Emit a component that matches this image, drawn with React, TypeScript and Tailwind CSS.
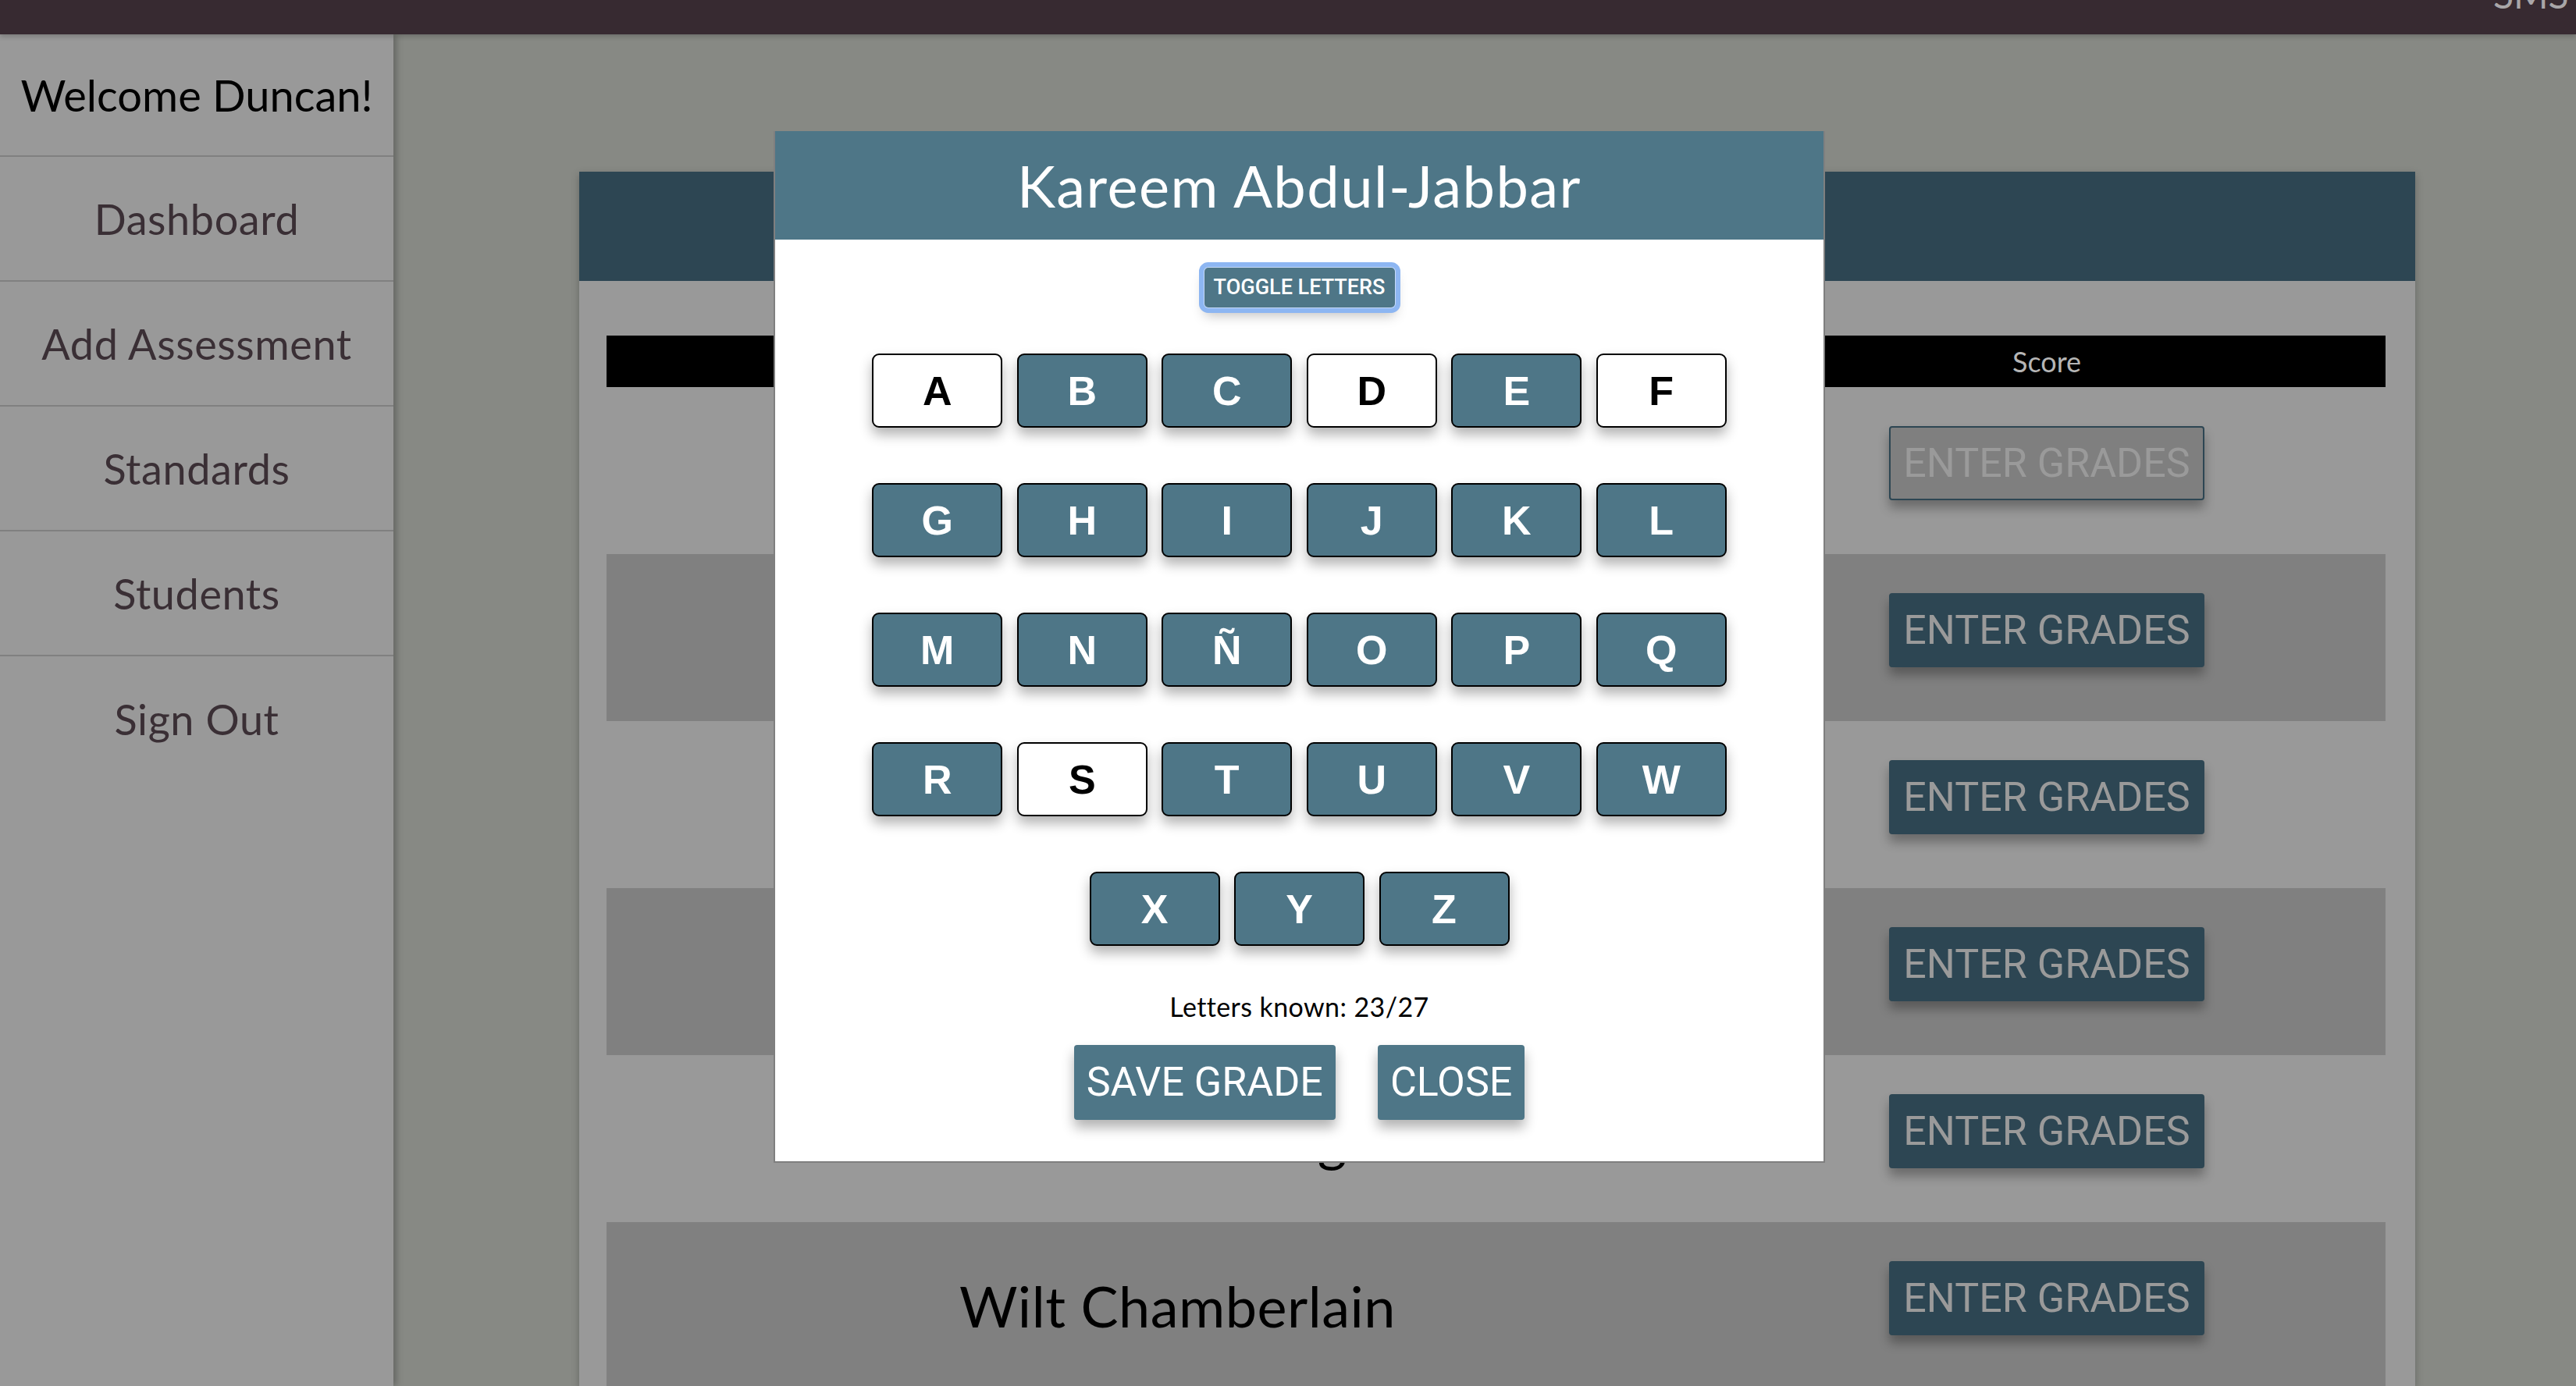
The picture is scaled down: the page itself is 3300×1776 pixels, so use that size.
import React from 'react';

const letterRows = [
  ['A', 'B', 'C', 'D', 'E', 'F'],
  ['G', 'H', 'I', 'J', 'K', 'L'],
  ['M', 'N', 'Ñ', 'O', 'P', 'Q'],
  ['R', 'S', 'T', 'U', 'V', 'W'],
  ['X', 'Y', 'Z'],
];

// letters still to learn show white
const unknown = ['A', 'D', 'F', 'S'];

const navItems = ['Dashboard', 'Add Assessment', 'Standards', 'Students', 'Sign Out'];

const students = [
  'Michael Jordan',
  'Kareem Abdul-Jabbar',
  'LeBron James',
  'Magic Johnson',
  'Patrick Ewing',
  'Wilt Chamberlain',
];

const App: React.FC = () => {
  return (
    <div className="relative w-[3300px] h-[1776px] overflow-hidden bg-[#878984] font-['Lato',sans-serif]">
      {/* Top bar */}
      <div className="relative z-20 h-[44px] bg-[#372a31] overflow-hidden pl-[3194px] shadow-[0_3px_6px_rgba(0,0,0,0.2)]">
        <span className="block whitespace-nowrap text-[48px] leading-none -mt-[31px] text-[#a9a6a8]">SMS</span>
      </div>

      <div className="flex h-[1732px]">
        {/* Sidebar */}
        <aside className="relative z-10 w-[504px] shrink-0 bg-[#999999] shadow-[4px_0_8px_rgba(0,0,0,0.25)]">
          <div className="h-[157px] flex items-center justify-center border-b-2 border-[#808080] text-[56px] text-black">
            Welcome Duncan!
          </div>
          {navItems.map((item, i) => (
            <div
              key={item}
              className={`h-[160px] flex items-center justify-center text-[54px] tracking-[0.6px] text-[#3a2f35] ${i < navItems.length - 1 ? 'border-b-2 border-[#808080]' : ''}`}
            >
              {item}
            </div>
          ))}
        </aside>

        {/* Main */}
        <main className="flex-1 pl-[238px] pr-[206px] pt-[176px]">
          <div className="bg-[#999999] h-full shadow-[0_4px_10px_rgba(0,0,0,0.25)]">
            <div className="h-[140px] bg-[#2d4653]" />
            <div className="pl-[35px] pr-[38px] pt-[70px]">
              <div className="h-[66px] bg-black flex items-center">
                <div className="w-[1411px]" />
                <div className="flex-1 text-center text-[36px] text-[#b5b5b5]">Score</div>
              </div>
              {students.map((name, i) => (
                <div key={name} className={`h-[214px] flex items-center ${i % 2 === 1 ? 'bg-[#808080]' : ''}`}>
                  <div className="w-[1411px] pl-[52px] text-center text-[72px] tracking-[0.5px] text-black whitespace-nowrap">{name}</div>
                  <div className="flex-1 flex justify-center">
                    <button
                      className={`mb-[19px] h-[95px] w-[404px] rounded-[4px] font-['Roboto',sans-serif] text-[52px] text-[#9a9a9a] shadow-[0_10px_14px_rgba(0,0,0,0.3)] ${i === 0 ? 'bg-[#7f7f7f] border-2 border-[#2d4653]' : 'bg-[#2d4653]'}`}
                    >
                      ENTER GRADES
                    </button>
                  </div>
                </div>
              ))}
            </div>
          </div>
        </main>
      </div>

      {/* Grade modal */}
      <div className="absolute left-[991px] top-[168px] w-[1347px] bg-white border-x-2 border-b-2 border-[#7f7f7f]">
        <div className="h-[139px] bg-[#4e7687] flex items-center justify-center text-[74px] tracking-[1.5px] text-white">
          Kareem Abdul-Jabbar
        </div>
        <div className="flex flex-col items-center pt-[36px] pb-[53px]">
          <button className="h-[51px] w-[244px] rounded-[5px] bg-[#4e7687] font-['Roboto',sans-serif] text-[27px] font-medium text-white shadow-[0_0_0_1px_#c6daf8,0_0_0_7px_#8db6f2,0_10px_16px_rgba(0,0,0,0.25)]">
            TOGGLE LETTERS
          </button>

          <div className="mt-[59px] flex flex-col items-center gap-[71px]">
            {letterRows.map((row, r) => (
              <div key={r} className="flex gap-[18.5px]">
                {row.map((l) => {
                  const white = unknown.includes(l);
                  return (
                    <button
                      key={l}
                      className={`w-[167px] h-[95px] rounded-[9px] border-2 border-black font-['Liberation_Sans',Arial,sans-serif] text-[52px] font-bold shadow-[0_9px_16px_rgba(0,0,0,0.3)] ${white ? 'bg-white text-black' : 'bg-[#4e7687] text-white'}`}
                    >
                      {l}
                    </button>
                  );
                })}
              </div>
            ))}
          </div>

          <p className="mt-[52px] text-[34px] tracking-[0.4px] text-black">Letters known: 23/27</p>

          <div className="mt-[24px] flex gap-[54px]">
            <button className="h-[96px] px-[16px] rounded-[4px] bg-[#4e7687] font-['Roboto',sans-serif] text-[52px] text-white shadow-[0_10px_16px_rgba(0,0,0,0.3)]">
              SAVE GRADE
            </button>
            <button className="h-[96px] px-[16px] rounded-[4px] bg-[#4e7687] font-['Roboto',sans-serif] text-[52px] text-white shadow-[0_10px_16px_rgba(0,0,0,0.3)]">
              CLOSE
            </button>
          </div>
        </div>
      </div>
    </div>
  );
};

export default App;
